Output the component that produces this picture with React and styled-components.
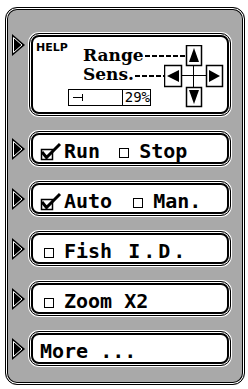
import React from 'react'
import styled, { createGlobalStyle } from 'styled-components'

const Global = createGlobalStyle`
  body {
    margin: 0;
    background: #fff;
  }
`

const Panel = styled.div`
  margin: 7px 0 0 5px;
  width: 240px;
  height: 378px;
  box-sizing: border-box;
  padding: 25px 13px 0 6px;
  background: #a9a9a9;
  border: 1px solid #000;
  border-radius: 12px;
  box-shadow: inset 0 0 0 1px #fff, inset 0 0 0 2px #000;
  display: flex;
  flex-direction: column;
  gap: 15px;
`

const Row = styled.div`
  display: grid;
  grid-template-columns: 17px 1fr;
  align-items: ${p => (p.$top ? 'start' : 'center')};
`

const Frame = styled.div`
  box-sizing: border-box;
  background: #fff;
  border: 1px solid #000;
  border-radius: 10px;
  box-shadow: 0 0 0 1px #fff, inset 0 0 0 1px #fff, inset 0 0 0 3px #000;
`

const HelpBox = styled(Frame)`
  height: 83px;
  padding: 8px 0 0 6px;
  display: grid;
  grid-template-columns: 47px 81px 22px 1fr;
  grid-template-rows: 23px 18px 1fr;
`

const HelpLabel = styled.div`
  grid-area: 1 / 1;
  font: bold 11px/11px "DejaVu Sans", sans-serif;
`

const Line = styled.div`
  grid-row: ${p => p.$row};
  grid-column: ${p => p.$cols};
  display: flex;
  align-items: flex-start;
`

const Big = styled.span`
  font: bold 17px/16px "DejaVu Serif", serif;
  margin-top: ${p => p.$mt}px;
`

const Dash = styled.span`
  flex: 1;
  height: 1.5px;
  margin: ${p => p.$mt}px 0 0 1px;
  background: repeating-linear-gradient(to right, #000 0 5px, transparent 5px 7px);
`

const Pad = styled.svg`
  grid-column: 3 / 5;
  grid-row: 1 / 4;
  margin-top: 3px;
`

const Bar = styled.div`
  grid-column: 1 / 3;
  grid-row: 3;
  margin: 6px 0 0 32px;
  width: 83px;
  height: 17px;
  box-sizing: border-box;
  border: 1.5px solid #000;
  display: flex;
`

const BarLeft = styled.div`
  width: 51px;
  border-right: 1.5px solid #000;
  display: flex;
  align-items: center;
  padding-left: 4px;
`

const Tick = styled.span`
  width: 10px;
  height: 1.5px;
  background: #000;
  position: relative;
  &::after {
    content: '';
    position: absolute;
    right: 0;
    top: -3px;
    width: 1.5px;
    height: 7px;
    background: #000;
  }
`

const BarValue = styled.div`
  font: 14px/14px "DejaVu Sans Mono", monospace;
  padding-left: 2px;
`

const Button = styled(Frame)`
  height: 35px;
  padding: 5px 0 0 10px;
  display: flex;
  align-items: center;
  font: bold 20px/20px "DejaVu Sans Mono", monospace;
  color: #000;
`

const Box = styled.span`
  width: 10px;
  height: 10px;
  box-sizing: border-box;
  border: 1.5px solid #000;
  margin: 3px 10px 0 ${p => p.$ml || 0}px;
  flex: none;
`

const Label = styled.span`
  white-space: pre;
  margin-left: ${p => p.$ml || 0}px;
  letter-spacing: ${p => p.$ls || 0}px;
`

const Marker = ({ top }) => (
  <svg width="13" height="22" viewBox="0 0 13 22" style={{ marginTop: top ? 1 : 0 }}>
    <polygon points="0,0 13,11 0,22" fill="#000" />
    <polygon points="1.5,3.5 10,11 1.5,18.5" fill="#000" stroke="#fff" strokeWidth="1" />
  </svg>
)

const Check = () => (
  <svg width="22" height="19" viewBox="0 0 22 19" style={{ marginRight: 2, flex: 'none' }}>
    <rect x="1.5" y="7.5" width="11" height="10" fill="#fff" stroke="#000" strokeWidth="1.5" />
    <path d="M2 10 L6.5 15.5 L20 2" fill="none" stroke="#000" strokeWidth="3" />
  </svg>
)

const ArrowPad = () => (
  <Pad width="60" height="63" viewBox="0 0 60 63">
    <g fill="#fff" stroke="#000" strokeWidth="1.5">
      <rect x="22.5" y="0.5" width="15" height="20" />
      <rect x="0.5" y="20.5" width="17" height="21" />
      <rect x="42.5" y="20.5" width="16" height="21" />
      <rect x="22.5" y="42.5" width="15" height="19" />
    </g>
    <g stroke="#000" strokeWidth="1">
      <line x1="29.5" y1="20" x2="29.5" y2="42" />
      <line x1="18" y1="30.5" x2="42" y2="30.5" />
    </g>
    <g fill="#000">
      <polygon points="30,3 25,17 35,17" />
      <polygon points="3,31 15,25 15,37" />
      <polygon points="56,31 45,25 45,37" />
      <polygon points="30,59 25,45 35,45" />
    </g>
  </Pad>
)

export default function App() {
  return (
    <>
      <Global />
      <Panel>
        <Row $top>
          <Marker top />
          <HelpBox>
            <HelpLabel>HELP</HelpLabel>
            <Line $row={1} $cols="2 / 4">
              <Big $mt={5}>Range</Big>
              <Dash $mt={13} />
            </Line>
            <Line $row={2} $cols="2 / 3">
              <Big $mt={1}>Sens.</Big>
              <Dash $mt={10} />
            </Line>
            <ArrowPad />
            <Bar>
              <BarLeft>
                <Tick />
              </BarLeft>
              <BarValue>29%</BarValue>
            </Bar>
          </HelpBox>
        </Row>
        <Row>
          <Marker />
          <Button>
            <Check />
            <Label>Run</Label>
            <Box $ml={19} />
            <Label>Stop</Label>
          </Button>
        </Row>
        <Row>
          <Marker />
          <Button>
            <Check />
            <Label>Auto</Label>
            <Box $ml={21} />
            <Label>Man.</Label>
          </Button>
        </Row>
        <Row>
          <Marker />
          <Button>
            <Box $ml={4} />
            <Label>Fish</Label>
            <Label $ml={16} $ls={3}>I.D.</Label>
          </Button>
        </Row>
        <Row>
          <Marker />
          <Button>
            <Box $ml={4} />
            <Label>Zoom X2</Label>
          </Button>
        </Row>
        <Row>
          <Marker />
          <Button>
            <Label>More ...</Label>
          </Button>
        </Row>
      </Panel>
    </>
  )
}
